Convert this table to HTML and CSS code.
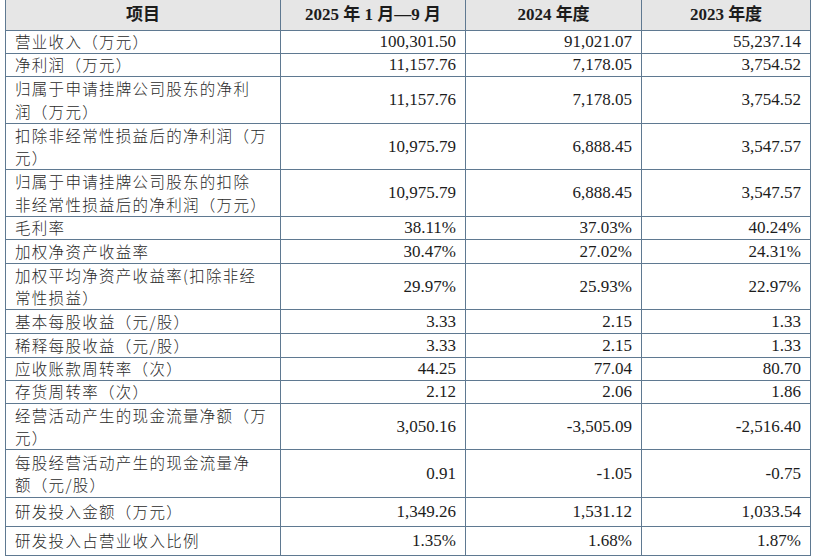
FILE: index.html
```html
<!DOCTYPE html>
<html lang="zh-CN">
<head>
<meta charset="utf-8">
<title>主要财务数据</title>
<link rel="stylesheet" href="styles.css">
</head>
<body>
<table class="fin">
  <colgroup>
    <col class="c-item">
    <col class="c-a">
    <col class="c-b">
    <col class="c-c">
  </colgroup>
  <thead>
    <tr class="hd">
      <th>项目</th>
      <th>2025 年 1 月—9 月</th>
      <th>2024 年度</th>
      <th>2023 年度</th>
    </tr>
  </thead>
  <tbody>
    <tr class="h23"><td>营业收入（万元）</td><td>100,301.50</td><td>91,021.07</td><td>55,237.14</td></tr>
    <tr class="h23"><td>净利润（万元）</td><td>11,157.76</td><td>7,178.05</td><td>3,754.52</td></tr>
    <tr class="h47"><td><span class="ln">归属于申请挂牌公司股东的净利</span><span class="ln">润（万元）</span></td><td>11,157.76</td><td>7,178.05</td><td>3,754.52</td></tr>
    <tr class="h46"><td><span class="ln">扣除非经常性损益后的净利润（万</span><span class="ln">元）</span></td><td>10,975.79</td><td>6,888.45</td><td>3,547.57</td></tr>
    <tr class="h47"><td><span class="ln">归属于申请挂牌公司股东的扣除</span><span class="ln">非经常性损益后的净利润（万元）</span></td><td>10,975.79</td><td>6,888.45</td><td>3,547.57</td></tr>
    <tr class="h23"><td>毛利率</td><td>38.11%</td><td>37.03%</td><td>40.24%</td></tr>
    <tr class="h24"><td>加权净资产收益率</td><td>30.47%</td><td>27.02%</td><td>24.31%</td></tr>
    <tr class="h46"><td><span class="ln">加权平均净资产收益率<span class="cp">(</span>扣除非经</span><span class="ln">常性损益）</span></td><td>29.97%</td><td>25.93%</td><td>22.97%</td></tr>
    <tr class="h24"><td>基本每股收益（元/股）</td><td>3.33</td><td>2.15</td><td>1.33</td></tr>
    <tr class="h24"><td>稀释每股收益（元/股）</td><td>3.33</td><td>2.15</td><td>1.33</td></tr>
    <tr class="h23"><td>应收账款周转率（次）</td><td>44.25</td><td>77.04</td><td>80.70</td></tr>
    <tr class="h23"><td>存货周转率（次）</td><td>2.12</td><td>2.06</td><td>1.86</td></tr>
    <tr class="h46"><td><span class="ln">经营活动产生的现金流量净额（万</span><span class="ln">元）</span></td><td>3,050.16</td><td>-3,505.09</td><td>-2,516.40</td></tr>
    <tr class="h48"><td><span class="ln">每股经营活动产生的现金流量净</span><span class="ln">额（元/股）</span></td><td>0.91</td><td>-1.05</td><td>-0.75</td></tr>
    <tr class="h29"><td>研发投入金额（万元）</td><td>1,349.26</td><td>1,531.12</td><td>1,033.54</td></tr>
    <tr class="h29"><td>研发投入占营业收入比例</td><td>1.35%</td><td>1.68%</td><td>1.87%</td></tr>
  </tbody>
</table>
</body>
</html>
```

FILE: styles.css
```css
html, body {
  margin: 0;
  padding: 0;
  background: #ffffff;
}

body {
  font-family: "Liberation Serif", "Noto Sans CJK SC", serif;
  color: #1c1c1c;
}

.fin {
  margin-left: 5px;
  width: 805px;
  table-layout: fixed;
  border-collapse: collapse;
  font-size: 17px;
}

.c-item { width: 275px; }
.c-a { width: 185px; }
.c-b { width: 176px; }
.c-c { width: 169px; }

.fin th,
.fin td {
  border: 1px solid #5f7991;
  padding: 0;
  vertical-align: middle;
  line-height: 21px;
  overflow: hidden;
  white-space: nowrap;
}

.fin th {
  border-top: none;
  background: #e6e6e6;
  font-weight: bold;
  text-align: center;
  font-size: 17px;
}

.fin td {
  text-align: right;
  padding-right: 9px;
}

.fin td:first-child {
  text-align: left;
  padding-left: 9px;
  padding-right: 0;
  font-family: "Noto Sans CJK SC", sans-serif;
  font-size: 15.5px;
  letter-spacing: 1.3px;
  font-weight: 300;
  color: #2a2a2a;
}

.ln {
  display: block;
  height: 22.5px;
  line-height: 22.5px;
}

.cp {
  font-family: "Noto Sans CJK SC", sans-serif;
}

.hd { height: 30px; }
.h23 { height: 23px; }
.h24 { height: 24px; }
.h29 { height: 29px; }
.h46 { height: 46px; }
.h47 { height: 47px; }
.h48 { height: 48px; }
```
